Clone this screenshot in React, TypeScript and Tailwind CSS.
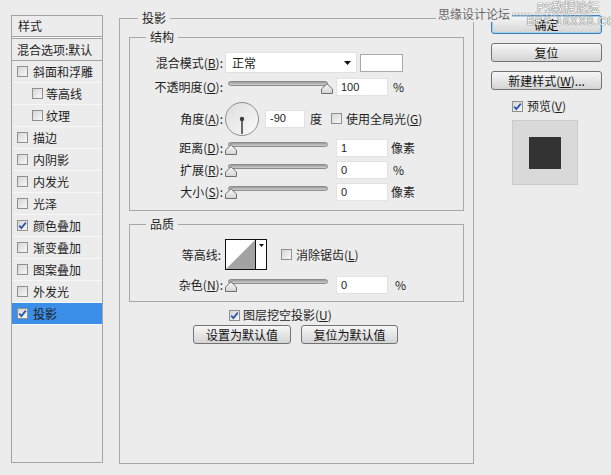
import React from "react";

const styleItems = [
  { label: "斜面和浮雕", indent: false, checked: false },
  { label: "等高线", indent: true, checked: false },
  { label: "纹理", indent: true, checked: false },
  { label: "描边", indent: false, checked: false },
  { label: "内阴影", indent: false, checked: false },
  { label: "内发光", indent: false, checked: false },
  { label: "光泽", indent: false, checked: false },
  { label: "颜色叠加", indent: false, checked: true },
  { label: "渐变叠加", indent: false, checked: false },
  { label: "图案叠加", indent: false, checked: false },
  { label: "外发光", indent: false, checked: false },
  { label: "投影", indent: false, checked: true, selected: true },
];

function Box({ checked }: { checked?: boolean }) {
  return (
    <span className="w-[11px] h-[11px] shrink-0 border border-[#8f8f8f] bg-gradient-to-br from-[#d6d6d6] to-[#f8f8f8] flex items-center justify-center">
      {checked && (
        <svg width="9" height="9" viewBox="0 0 9 9">
          <path d="M1.2 4.6 L3.4 7 L7.8 1.6" stroke="#2d57a8" strokeWidth="1.8" fill="none" />
        </svg>
      )}
    </span>
  );
}

function Slider({ end }: { end?: boolean }) {
  return (
    <div className="relative w-[108px] h-[14px] shrink-0">
      <div className="absolute left-[3px] top-[1px] w-[100px] h-[5px] rounded-full border border-[#8c8c8c] bg-gradient-to-b from-[#9a9a9a] to-[#d0d0d0]" />
      <svg
        className={`absolute top-[3px] ${end ? "left-[96px]" : "left-0"}`}
        width="12"
        height="11"
        viewBox="0 0 12 11"
      >
        <defs>
          <linearGradient id="thumb" x1="0" y1="0" x2="0" y2="1">
            <stop offset="0" stopColor="#fafafa" />
            <stop offset="1" stopColor="#d4d4d4" />
          </linearGradient>
        </defs>
        <path d="M0.5 10.5 V6 L6 0.8 L11.5 6 V10.5 Z" fill="url(#thumb)" stroke="#6f6f6f" />
      </svg>
    </div>
  );
}

function Field({ value, w = "w-[52px]" }: { value: string; w?: string }) {
  return (
    <div
      className={`${w} h-[18px] shrink-0 bg-white border border-[#e2e2e2] pl-[4px] flex items-center text-[11px] font-['Liberation_Sans',sans-serif] text-[#222]`}
    >
      {value}
    </div>
  );
}

function Label({ text, k, rest = "" }: { text: string; k?: string; rest?: string }) {
  return (
    <div className="w-[93px] shrink-0 text-right leading-4 whitespace-nowrap">
      {text}
      {k && (
        <>
          (<span className="underline">{k}</span>)
        </>
      )}
      {rest}:
    </div>
  );
}

function Btn({ children, w, def }: { children: React.ReactNode; w: string; def?: boolean }) {
  return (
    <div
      className={`${w} h-[19px] shrink-0 rounded-[3px] border ${
        def ? "border-[#3f7fb3] shadow-[inset_0_0_0_1px_#9fd0f0]" : "border-[#737373]"
      } bg-gradient-to-b from-[#f7f7f7] to-[#d4d4d4] flex items-center justify-center leading-4 text-[12px] text-[#111]`}
    >
      {children}
    </div>
  );
}

export default function App() {
  return (
    <div className="relative w-[611px] h-[475px] overflow-hidden bg-[#ececec] flex text-[12px] text-[#1e1e1e] font-['Noto_Sans_CJK_SC',sans-serif]">
      {/* Left style list */}
      <div className="ml-[11px] mt-[15px] w-[92px] h-[448px] border border-[#a3a3a3] flex flex-col">
        <div className="h-[21px] pl-[6px] flex items-center leading-4 border-b border-[#a3a3a3]">样式</div>
        <div className="h-px bg-[#f7f7f7]" />
        <div className="h-[23px] pl-[5px] flex items-center leading-4 border-t border-b border-[#a3a3a3] whitespace-nowrap">
          混合选项:默认
        </div>
        {styleItems.map((it) => (
          <div
            key={it.label}
            className={`h-[22px] flex items-center border-b border-[#f7f7f7] leading-4 ${
              it.indent ? "pl-[20px] gap-[3px]" : "pl-[5px] gap-[5px]"
            } ${it.selected ? "bg-[#3c8fe9]" : ""}`}
          >
            <Box checked={it.checked} />
            <span>{it.label}</span>
          </div>
        ))}
      </div>

      {/* Main settings */}
      <fieldset className="ml-[16px] mt-[10px] w-[355px] h-[454px] border border-[#a8a8a8] px-[9px]">
        <legend className="ml-[9px] px-[4px] leading-4">投影</legend>

        <fieldset className="mt-[3px] border border-[#a8a8a8] pb-[9px]">
          <legend className="ml-[16px] px-[4px] leading-4">结构</legend>

          <div className="mt-[7px] h-[21px] flex items-center">
            <Label text="混合模式" k="B" />
            <div className="ml-[2px] w-[132px] h-[21px] bg-white border border-[#e0e0e0] flex items-center pl-[6px] pr-[5px] justify-between">
              <span className="leading-4">正常</span>
              <svg width="7" height="4" viewBox="0 0 7 4">
                <path d="M0 0 H7 L3.5 4 Z" fill="#111" />
              </svg>
            </div>
            <div className="ml-[3px] w-[43px] h-[18px] bg-white border border-[#a9a9a9]" />
          </div>

          <div className="mt-[4px] h-[20px] flex items-center">
            <Label text="不透明度" k="O" />
            <div className="ml-[2px] flex items-center">
              <Slider end />
              <div className="ml-[3px]">
                <Field value="100" />
              </div>
              <span className="ml-[5px] leading-4">%</span>
            </div>
          </div>

          <div className="mt-[4px] h-[35px] flex items-center">
            <Label text="角度" k="A" />
            <div className="ml-[2px] w-[34px] h-[34px] rounded-full border border-[#8e8e8e] bg-gradient-to-br from-[#dedede] to-[#fafafa] relative flex items-center justify-center">
              <svg width="34" height="34" viewBox="0 0 34 34" className="absolute -left-px -top-px">
                <line x1="17" y1="17" x2="17" y2="32" stroke="#6a6a6a" strokeWidth="2" />
                <circle cx="17" cy="17" r="2.2" fill="#3d3d3d" />
              </svg>
            </div>
            <div className="ml-[6px]">
              <Field value="-90" w="w-[40px]" />
            </div>
            <span className="ml-[5px] leading-4">度</span>
            <div className="ml-[9px] flex items-center gap-[4px]">
              <Box />
              <span className="leading-4">
                使用全局光(<span className="underline">G</span>)
              </span>
            </div>
          </div>

          <div className="mt-[3px] h-[18px] flex items-center">
            <Label text="距离" k="D" />
            <div className="ml-[2px] flex items-center">
              <Slider />
              <div className="ml-[3px]">
                <Field value="1" />
              </div>
              <span className="ml-[3px] leading-4">像素</span>
            </div>
          </div>

          <div className="mt-[4px] h-[18px] flex items-center">
            <Label text="扩展" k="R" />
            <div className="ml-[2px] flex items-center">
              <Slider />
              <div className="ml-[3px]">
                <Field value="0" />
              </div>
              <span className="ml-[5px] leading-4">%</span>
            </div>
          </div>

          <div className="mt-[4px] h-[18px] flex items-center">
            <Label text="大小" k="S" />
            <div className="ml-[2px] flex items-center">
              <Slider />
              <div className="ml-[3px]">
                <Field value="0" />
              </div>
              <span className="ml-[3px] leading-4">像素</span>
            </div>
          </div>
        </fieldset>

        <fieldset className="mt-[5px] border border-[#a8a8a8] pb-[7px]">
          <legend className="ml-[16px] px-[4px] leading-4">品质</legend>

          <div className="mt-[7px] h-[31px] flex items-center">
            <div className="w-[91px] shrink-0 text-right leading-4">等高线:</div>
            <div className="ml-[4px] w-[42px] h-[31px] border border-[#111] bg-white flex">
              <svg width="29" height="29" viewBox="0 0 29 29" className="shrink-0">
                <path d="M0 29 L29 0 V29 Z" fill="#a3a3a3" />
              </svg>
              <div className="w-[11px] h-full border-l border-[#111] flex justify-center pt-[4px]">
                <svg width="5" height="3" viewBox="0 0 5 3">
                  <path d="M0 0 H5 L2.5 3 Z" fill="#111" />
                </svg>
              </div>
            </div>
            <div className="ml-[14px] flex items-center gap-[4px]">
              <Box />
              <span className="leading-4">
                消除锯齿(<span className="underline">L</span>)
              </span>
            </div>
          </div>

          <div className="mt-[6px] h-[18px] flex items-center">
            <Label text="杂色" k="N" />
            <div className="ml-[2px] flex items-center">
              <Slider />
              <div className="ml-[3px]">
                <Field value="0" />
              </div>
              <span className="ml-[7px] leading-4">%</span>
            </div>
          </div>
        </fieldset>

        <div className="mt-[6px] h-[14px] ml-[100px] flex items-center gap-[3px]">
          <Box checked />
          <span className="leading-4">
            图层挖空投影(<span className="underline">U</span>)
          </span>
        </div>

        <div className="mt-[3px] ml-[64px] flex gap-[10px]">
          <Btn w="w-[98px]">设置为默认值</Btn>
          <Btn w="w-[97px]">复位为默认值</Btn>
        </div>
      </fieldset>

      {/* Right column */}
      <div className="ml-[17px] mt-[15px] w-[111px] flex flex-col">
        <Btn w="w-[111px]" def>
          确定
        </Btn>
        <div className="mt-[9px]">
          <Btn w="w-[111px]">复位</Btn>
        </div>
        <div className="mt-[9px]">
          <Btn w="w-[111px]">
            新建样式(<span className="underline">W</span>)...
          </Btn>
        </div>
        <div className="mt-[9px] h-[14px] pl-[21px] flex items-center gap-[4px]">
          <Box checked />
          <span className="leading-4">
            预览(<span className="underline">V</span>)
          </span>
        </div>
        <div className="mt-[7px] ml-[21px] w-[66px] h-[65px] bg-[#d9d9d9] border border-[#cbcbcb] flex items-center justify-center">
          <div className="w-[32px] h-[32px] bg-[#333333]" />
        </div>
      </div>

      {/* Watermarks */}
      <div className="absolute left-[436px] top-[6px] flex items-center leading-4 text-[#6a6a6a] whitespace-nowrap">
        <span className="bg-[#ececec] px-[2px]">思缘设计论坛</span>
        <span className="text-[9px] text-[#c8c8c8] font-['Liberation_Sans',sans-serif]">www.missyuan.com</span>
      </div>
      <div className="absolute left-[537px] top-0 leading-[14px] text-[12px] text-white [text-shadow:0_0_1px_#555,0_0_1px_#555]">
        PS教程论坛
      </div>
      <div className="absolute left-[527px] top-[14px] leading-[14px] text-[11px] text-white font-['Liberation_Sans',sans-serif] tracking-[1px] [text-shadow:0_0_1px_#555,0_0_1px_#555]">
        BBS.16XX8.COM
      </div>
    </div>
  );
}
